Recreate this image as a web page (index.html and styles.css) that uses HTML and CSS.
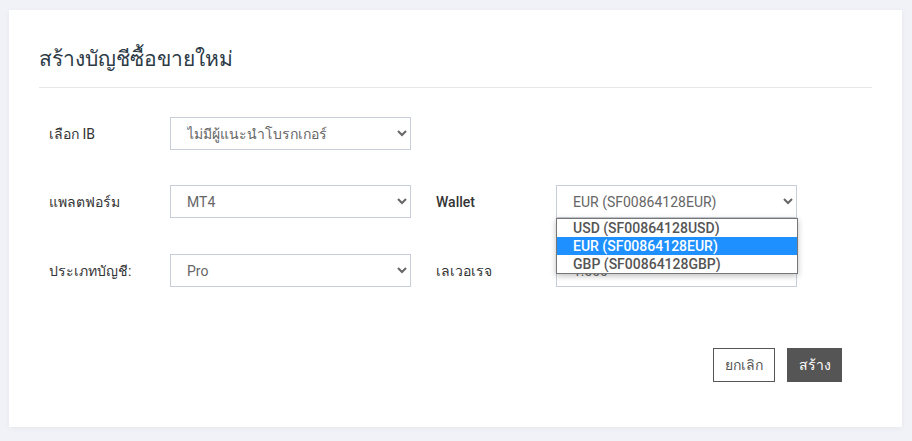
FILE: index.html
```html
<!DOCTYPE html>
<html lang="th">
<head>
  <meta charset="UTF-8" />
  <meta name="viewport" content="width=device-width, initial-scale=1.0"/>
  <title>สร้างบัญชีซื้อขายใหม่</title>
  <link rel="stylesheet" href="styles.css">
</head>
<body>
  <div class="card">
    <h3 class="card-title">สร้างบัญชีซื้อขายใหม่</h3>

    <div class="form-grid">
      <div class="field">
        <label for="ib">เลือก IB</label>
        <select id="ib">
          <option>ไม่มีผู้แนะนำโบรกเกอร์</option>
        </select>
      </div>
      <div class="field"></div>

      <div class="field">
        <label for="platform">แพลตฟอร์ม</label>
        <select id="platform">
          <option>MT4</option>
          <option>MT5</option>
        </select>
      </div>
      <div class="field">
        <label for="wallet" class="strong">Wallet</label>
        <div class="select-wrap">
          <select id="wallet">
            <option>USD (SF00864128USD)</option>
            <option selected>EUR (SF00864128EUR)</option>
            <option>GBP (SF00864128GBP)</option>
          </select>
          <ul class="dropdown">
            <li>USD (SF00864128USD)</li>
            <li class="active">EUR (SF00864128EUR)</li>
            <li>GBP (SF00864128GBP)</li>
          </ul>
        </div>
      </div>

      <div class="field row-3">
        <label for="type">ประเภทบัญชี:</label>
        <select id="type">
          <option>Pro</option>
          <option>Standard</option>
        </select>
      </div>
      <div class="field row-3">
        <label for="leverage">เลเวอเรจ</label>
        <select id="leverage">
          <option>1:500</option>
        </select>
      </div>
    </div>

    <div class="actions">
      <button class="btn btn-outline">ยกเลิก</button>
      <button class="btn btn-dark">สร้าง</button>
    </div>
  </div>
</body>
</html>
```

FILE: styles.css
```css
* {
  box-sizing: border-box;
  font-family: Roboto, "Noto Sans", "DejaVu Sans", sans-serif;
}

body {
  margin: 0;
  padding: 10px 10px 15px 9px;
  background: #f0f2f7;
}

.card {
  background: #fff;
  width: 893px;
  padding: 30px 30px 45px;
  box-shadow: 0 1px 6px rgba(0, 0, 0, 0.05);
}

.card-title {
  margin: 0;
  padding: 6px 0 14px;
  font-size: 21px;
  font-weight: 400;
  line-height: 27px;
  color: #2c3a46;
  border-bottom: 1px solid #e6e6e6;
}

.form-grid {
  display: grid;
  grid-template-columns: 387px 362px;
  row-gap: 35px;
  padding: 29px 0 0 10px;
}

.field {
  display: flex;
  align-items: center;
  min-height: 33px;
}

.field.row-3 {
  margin-top: 1px;
}

.field label {
  width: 121px;
  flex-shrink: 0;
  font-size: 14px;
  color: #333;
}

.field label.strong {
  font-weight: 500;
}

.field:nth-child(even) label {
  width: 120px;
}

select {
  width: 241px;
  height: 33px;
  padding: 0 10px 0 12px;
  border: 1px solid #c8ced8;
  border-radius: 0;
  background: #fff;
  font-size: 14px;
  color: #666;
}

.select-wrap {
  position: relative;
}

.dropdown {
  position: absolute;
  top: 33px;
  left: 0;
  width: 242px;
  margin: 0;
  padding: 0;
  list-style: none;
  background: #fff;
  border: 1px solid #767676;
  box-shadow: 0 2px 6px rgba(0, 0, 0, 0.25);
  z-index: 2;
}

.dropdown li {
  height: 18px;
  line-height: 18px;
  padding-left: 16px;
  font-size: 14px;
  font-weight: 500;
  color: #555;
}

.dropdown li.active {
  background: #1e90ff;
  color: #fff;
}

.actions {
  display: flex;
  justify-content: flex-end;
  gap: 12px;
  padding: 61px 30px 0 0;
}

.btn {
  height: 34px;
  padding: 0;
  font-size: 14px;
  border-radius: 0;
  cursor: pointer;
}

.btn-outline {
  width: 62px;
  background: #fff;
  border: 1px solid #555;
  color: #555;
}

.btn-dark {
  width: 55px;
  background: #555;
  border: 1px solid #555;
  color: #fff;
}
```
